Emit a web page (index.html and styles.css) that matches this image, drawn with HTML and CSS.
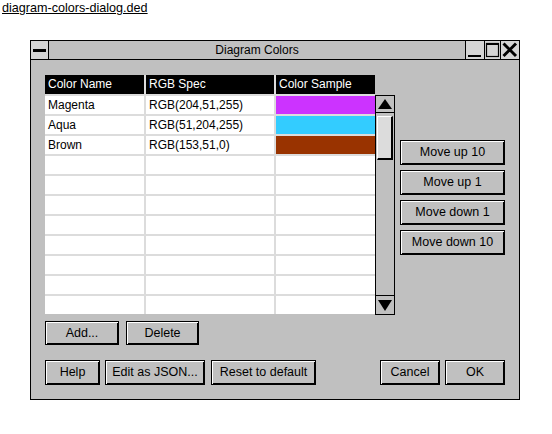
FILE: index.html
```html
<!DOCTYPE html>
<html>
<head>
<meta charset="utf-8">
<link rel="stylesheet" href="styles.css">
</head>
<body>
<div class="top"><a class="file-link" href="#">diagram-colors-dialog.ded</a></div>
<div class="dialog">
  <div class="titlebar">
    <div class="tb-btn menu-btn"><span class="dash"></span></div>
    <div class="title">Diagram Colors</div>
    <div class="tb-btn min-btn"><svg width="18" height="18" viewBox="0 0 18 18"><rect x="2" y="14" width="13" height="2" fill="#000"/></svg></div>
    <div class="tb-btn max-btn"><svg width="15" height="18" viewBox="0 0 15 18"><rect x="1.5" y="2.5" width="12" height="13" fill="none" stroke="#000" stroke-width="1.2"/><rect x="1" y="2" width="13" height="2" fill="#000"/></svg></div>
    <div class="tb-btn close-btn"><svg width="18" height="18" viewBox="0 0 18 18"><path d="M2.5 2.5 L15 15 M15 2.5 L2.5 15" stroke="#000" stroke-width="3" fill="none"/></svg></div>
  </div>
  <div class="body">
    <div class="main-row">
      <div class="grid">
        <div class="hd">Color Name</div><div class="hd">RGB Spec</div><div class="hd">Color Sample</div>
        <div class="cell">Magenta</div><div class="cell">RGB(204,51,255)</div><div class="cell swatch" style="background:#cc33ff"></div>
        <div class="cell">Aqua</div><div class="cell">RGB(51,204,255)</div><div class="cell swatch" style="background:#33ccff"></div>
        <div class="cell">Brown</div><div class="cell">RGB(153,51,0)</div><div class="cell swatch" style="background:#993300"></div>
        <div class="cell"></div><div class="cell"></div><div class="cell"></div>
        <div class="cell"></div><div class="cell"></div><div class="cell"></div>
        <div class="cell"></div><div class="cell"></div><div class="cell"></div>
        <div class="cell"></div><div class="cell"></div><div class="cell"></div>
        <div class="cell"></div><div class="cell"></div><div class="cell"></div>
        <div class="cell"></div><div class="cell"></div><div class="cell"></div>
        <div class="cell"></div><div class="cell"></div><div class="cell"></div>
        <div class="cell"></div><div class="cell"></div><div class="cell"></div>
      </div>
      <div class="scrollbar">
        <div class="sb-up"><svg width="18" height="16" viewBox="0 0 18 16"><polygon points="2,13 16,13 9,3" fill="#000"/></svg></div>
        <div class="sb-thumb"></div>
        <div class="sb-track"></div>
        <div class="sb-down"><svg width="18" height="18" viewBox="0 0 18 18"><polygon points="2,4 16,4 9,15" fill="#000"/></svg></div>
      </div>
      <div class="side">
        <div class="btn side-btn">Move up 10</div>
        <div class="btn side-btn">Move up 1</div>
        <div class="btn side-btn">Move down 1</div>
        <div class="btn side-btn">Move down 10</div>
      </div>
    </div>
    <div class="edit-row">
      <div class="btn add-btn">Add...</div>
      <div class="btn del-btn">Delete</div>
    </div>
    <div class="bottom-row">
      <div class="group">
        <div class="btn help-btn">Help</div>
        <div class="btn json-btn">Edit as JSON...</div>
        <div class="btn reset-btn">Reset to default</div>
      </div>
      <div class="group right">
        <div class="btn cancel-btn">Cancel</div>
        <div class="btn ok-btn">OK</div>
      </div>
    </div>
  </div>
</div>
</body>
</html>
```

FILE: styles.css
```css
* { box-sizing: border-box; }
html, body { margin: 0; padding: 0; background: #fff; }
body { font-family: "Liberation Sans", Arial, sans-serif; font-size: 12px; color: #000; }

.top { height: 40px; padding: 1px 0 0 2px; }
.file-link { color: #000; text-decoration: underline; font-size: 12.6px; line-height: 14px; }

.dialog {
  margin-left: 30px;
  width: 490px;
  height: 360px;
  border: 1px solid #000;
  background: #c0c0c0;
  display: flex;
  flex-direction: column;
}

.titlebar {
  height: 19px;
  border-bottom: 1px solid #000;
  display: flex;
  align-items: stretch;
}
.tb-btn { background: #d4d4d4; display: flex; align-items: center; justify-content: center; }
.menu-btn { width: 18px; border-right: 1px solid #000; }
.dash { display: block; width: 13px; height: 3px; background: #000; }
.title { flex: 1; text-align: center; line-height: 18px; font-size: 12px; }
.min-btn { width: 19px; border-left: 1px solid #000; }
.max-btn { width: 16px; border-left: 1px solid #000; }
.close-btn { width: 19px; border-left: 1px solid #000; }
.tb-btn svg { display: block; }

.body { padding: 15px 14px 0 14px; display: flex; flex-direction: column; }

.main-row { display: flex; align-items: flex-start; }

.grid {
  width: 330px;
  display: grid;
  grid-template-columns: 99px 128px 99px;
  grid-template-rows: 19px repeat(11, 18px);
  column-gap: 2px;
  row-gap: 2px;
  background: #dcdcdc;
}
.hd { background: #000; color: #fff; padding-left: 3px; line-height: 19px; white-space: nowrap; }
.cell { background: #fff; padding-left: 3px; line-height: 18px; white-space: nowrap; }
.cell.swatch { padding: 0; }

.scrollbar {
  margin-top: 20px;
  width: 20px;
  height: 220px;
  border: 1px solid #000;
  background: #c0c0c0;
  display: flex;
  flex-direction: column;
}
.sb-up { height: 17px; border-bottom: 1px solid #000; display: flex; align-items: center; justify-content: center; }
.sb-thumb {
  margin: 3px 1px 0 1px;
  height: 44px;
  background: #dcdcdc;
  border-top: 1px solid #fff;
  border-left: 1px solid #fff;
  border-right: 2px solid #000;
  border-bottom: 2px solid #000;
}
.sb-track { flex: 1; }
.sb-down { height: 19px; border-top: 1px solid #000; display: flex; align-items: center; justify-content: center; }
.sb-up svg, .sb-down svg { display: block; }

.side { margin-left: 5px; margin-top: 65px; display: flex; flex-direction: column; gap: 5px; }

.btn {
  border: 1px solid #000;
  background: #c0c0c0;
  box-shadow: inset 1px 1px 0 #fff, inset -1px -1px 0 #000;
  display: flex;
  align-items: center;
  justify-content: center;
  white-space: nowrap;
  font-size: 12.5px;
  padding-bottom: 1px;
}
.side-btn { width: 105px; height: 25px; }

.edit-row { margin-top: 6px; display: flex; gap: 7px; }
.add-btn { width: 74px; height: 24px; }
.del-btn { width: 73px; height: 24px; }

.bottom-row { margin-top: 15px; display: flex; justify-content: space-between; }
.group { display: flex; gap: 5px; }
.bottom-row .btn { height: 25px; }
.help-btn { width: 55px; }
.json-btn { width: 100px; }
.reset-btn { width: 105px; margin-left: 1px; }
.cancel-btn { width: 60px; }
.ok-btn { width: 60px; }
```
